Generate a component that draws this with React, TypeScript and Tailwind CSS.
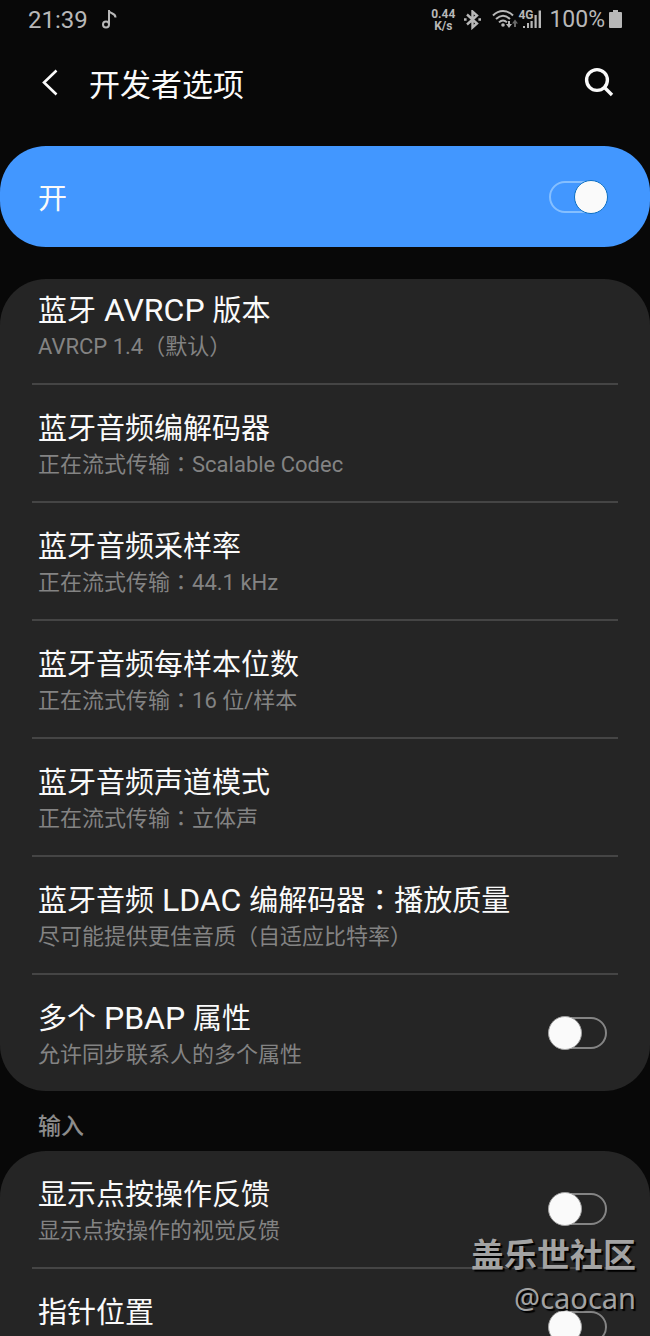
import { useState } from "react";

interface Setting {
    id: string;
    title: string;
    summary?: string;
    toggle?: boolean;
}

const bluetoothSettings: Setting[] = [
    { id: "avrcp", title: "蓝牙 AVRCP 版本", summary: "AVRCP 1.4（默认）" },
    { id: "codec", title: "蓝牙音频编解码器", summary: "正在流式传输：Scalable Codec" },
    { id: "rate", title: "蓝牙音频采样率", summary: "正在流式传输：44.1 kHz" },
    { id: "bits", title: "蓝牙音频每样本位数", summary: "正在流式传输：16 位/样本" },
    { id: "channel", title: "蓝牙音频声道模式", summary: "正在流式传输：立体声" },
    { id: "ldac", title: "蓝牙音频 LDAC 编解码器：播放质量", summary: "尽可能提供更佳音质（自适应比特率）" },
    { id: "pbap", title: "多个 PBAP 属性", summary: "允许同步联系人的多个属性", toggle: true },
];

const inputSettings: Setting[] = [
    { id: "taps", title: "显示点按操作反馈", summary: "显示点按操作的视觉反馈", toggle: true },
    { id: "pointer", title: "指针位置", summary: "屏幕叠加层显示当前触摸数据", toggle: true },
];

// Latin runs can be set larger than the Chinese around them, and the
// full-width colon uses the TC face, where it sits in the middle of its cell
function MixedText({ text, latinClass }: { text: string; latinClass?: string }) {
    return (
        <>
            {text.split(/([A-Za-z0-9./ ]+|：)/).map((part, i) => {
                if (i % 2 === 0) return part;
                if (part === "：") {
                    return <span key={i} className="font-['Noto_Sans_CJK_TC',sans-serif] leading-none">：</span>;
                }
                return <span key={i} className={latinClass}>{part}</span>;
            })}
        </>
    );
}

function Toggle({ id, checked, onChange }: { id: string; checked: boolean; onChange: (v: boolean) => void }) {
    return (
        <input
            id={id}
            type="checkbox"
            role="switch"
            checked={checked}
            onChange={(e) => onChange(e.target.checked)}
            className="relative h-8 w-[58px] shrink-0 cursor-pointer appearance-none rounded-full border-2 border-[#848484] before:absolute before:-top-[3px] before:-left-[3px] before:size-[34px] before:rounded-full before:border before:border-[#a0a0a0] before:bg-[#fafafa] checked:border-[#85bfff] checked:before:left-[23px] checked:before:border-[#0b6fc4]"
        />
    );
}

function SettingRow({ setting }: { setting: Setting }) {
    const [on, setOn] = useState(false);
    const text = (
        <span className="block min-w-0">
            <span className="block text-[29px] leading-10 whitespace-nowrap text-[#fafafa]">
                <MixedText text={setting.title} latinClass="text-[32px] leading-none" />
            </span>
            {setting.summary && (
                <span className="block text-[22px] leading-8 whitespace-nowrap text-[#838383]">
                    <MixedText text={setting.summary} />
                </span>
            )}
        </span>
    );

    return (
        <li className="mx-8 border-b-2 border-[#454545] last:border-b-0">
            {setting.toggle ? (
                <div className="flex items-center justify-between pr-[11px] pl-1.5">
                    <label htmlFor={setting.id} className="grow cursor-pointer pt-6 pb-5">{text}</label>
                    <Toggle id={setting.id} checked={on} onChange={setOn} />
                </div>
            ) : (
                <button type="button" className="block w-full cursor-pointer pt-6 pr-[11px] pb-5 pl-1.5 text-left">{text}</button>
            )}
        </li>
    );
}

function StatusBar() {
    return (
        <div className="flex h-10 items-center justify-between px-7 text-[#b8b8b8]">
            <div className="flex items-center gap-3.5">
                <span className="text-2xl">21:39</span>
                <svg className="h-5 w-4" viewBox="0 0 16 20" fill="none" stroke="currentColor" strokeWidth="2">
                    <circle cx="4" cy="14.500" r="3" />
                    <path d="M7 14.500V0M7 1c1 3 6.500 1.500 6.500 6.500" />
                </svg>
            </div>
            <div className="flex items-center">
                <span className="mr-2 text-center text-xs leading-3 font-bold">
                    <span className="block">0.44</span>
                    <span className="block">K/s</span>
                </span>
                <svg className="mr-2.5 h-5 w-[19px]" viewBox="0 0 19 20" fill="none" stroke="currentColor" strokeWidth="2.4">
                    <path d="M4 4.500 14 13.500 9.500 17.500V1.500L14 5.500 4 14.500" />
                    <path d="M1 9.500h2.600M15.400 9.500H18" />
                </svg>
                <svg className="h-5 w-[26px]" viewBox="0 0 26 20" fill="none" stroke="currentColor" strokeWidth="2">
                    <path d="M1 5.500C7-.5 15-.5 21 5.500M4 9C8.500 4.800 13.500 4.800 18 9M7 12.400C9.500 10 12.500 10 15 12.400" />
                    <circle cx="11" cy="15" r="1.800" fill="currentColor" stroke="none" />
                    <path d="M17 11v4" />
                    <path d="M14 14h6l-3 4z" fill="currentColor" stroke="none" />
                    <g className="text-[#686868]">
                        <path d="M23 17v-4" stroke="currentColor" />
                        <path d="M20 13.500h6l-3-4z" fill="currentColor" stroke="none" />
                    </g>
                </svg>
                <span className="relative mr-2 h-5 w-[23px]">
                    <span className="absolute -top-px left-0 text-xs leading-3 font-bold">4G</span>
                    <svg className="h-5 w-[23px]" viewBox="0 0 23 20" fill="currentColor">
                        <path d="M5 16h2v2H5zM9 13h2v5H9zM12.500 11h2.200v7h-2.200zM16.500 5h2.200v13h-2.200zM20.600 0.500H23V18h-2.400z" />
                    </svg>
                </span>
                <span className="mr-1 text-[23px]">100%</span>
                <svg className="h-5 w-[13px]" viewBox="0 0 13 20" fill="currentColor">
                    <path d="M4 0h5v2h3a1 1 0 0 1 1 1v14a1 1 0 0 1-1 1H1a1 1 0 0 1-1-1V3a1 1 0 0 1 1-1h3z" />
                </svg>
            </div>
        </div>
    );
}

export default function DeveloperOptions() {
    const [enabled, setEnabled] = useState(true);

    return (
        <div className="relative h-screen overflow-hidden bg-[#080808] font-['Roboto','Noto_Sans_CJK_SC',sans-serif]">
            <StatusBar />

            <header className="flex h-[106px] items-start pt-6 pr-9 pl-10">
                <button type="button" aria-label="返回" className="flex h-9 w-[49px] cursor-pointer items-center text-[#fafafa]">
                    <svg className="h-7 w-5" viewBox="0 0 20 28" fill="none" stroke="currentColor" strokeWidth="2.6">
                        <path d="M16.500 2.500 4 14.500 16.500 26.500" />
                    </svg>
                </button>
                <h1 className="grow text-[31px] leading-11 text-[#fafafa]">开发者选项</h1>
                <button type="button" aria-label="搜索" className="flex h-9 cursor-pointer items-center text-[#fafafa]">
                    <svg className="size-[30px]" viewBox="0 0 30 30" fill="none" stroke="currentColor" strokeWidth="3.400">
                        <circle cx="13" cy="13" r="10.400" />
                        <path d="m20.500 20.500 7.500 7.500" />
                    </svg>
                </button>
            </header>

            <main>
                <div className="flex h-[101px] items-center justify-between rounded-[46px] bg-[#4297ff] pr-[43px] pl-[38px]">
                    <label htmlFor="master" className="grow cursor-pointer pt-1 text-[29px] leading-10 text-[#fafafa]">开</label>
                    <Toggle id="master" checked={enabled} onChange={setEnabled} />
                </div>

                {/* the list is scrolled a little under the top edge of its card */}
                <section className="mt-8 overflow-hidden rounded-[46px] bg-[#252525]">
                    <ul className="-mt-3">
                        {bluetoothSettings.map((s) => (
                            <SettingRow key={s.id} setting={s} />
                        ))}
                    </ul>
                </section>

                <h2 className="px-[38px] pt-5 pb-2 text-[23px] leading-8 font-medium text-[#8c8c8c]">输入</h2>

                <section className="overflow-hidden rounded-t-[46px] bg-[#252525]">
                    <ul>
                        {inputSettings.map((s) => (
                            <SettingRow key={s.id} setting={s} />
                        ))}
                    </ul>
                </section>
            </main>

            {/* Watermark */}
            <div className="pointer-events-none absolute right-3.5 bottom-[18px] text-right text-[#a3a3a3] [text-shadow:2px_2px_1px_#000]">
                <p className="text-[33px] leading-[44px] font-bold">盖乐世社区</p>
                <p className="font-['Noto_Sans',sans-serif] text-[29px] leading-10">@caocan</p>
            </div>
        </div>
    );
}
